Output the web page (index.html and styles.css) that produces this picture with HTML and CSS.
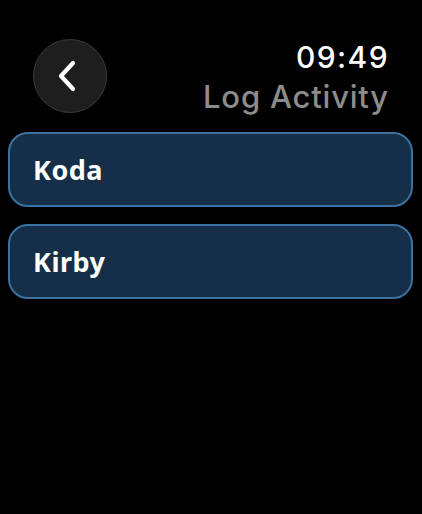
FILE: index.html
```html
<!DOCTYPE html>
<html lang="en">
<head>
<meta charset="utf-8">
<title>Log Activity</title>
<link rel="stylesheet" href="styles.css">
</head>
<body>
  <div class="screen">
    <header class="top">
      <button class="back" aria-label="Back">
        <svg width="24" height="34" viewBox="0 0 24 34">
          <path d="M17 4 L5 17 L17 30" fill="none" stroke="#fff" stroke-width="4.2" stroke-linecap="round" stroke-linejoin="round"/>
        </svg>
      </button>
      <div class="titles">
        <div class="time">09:49</div>
        <div class="title">Log Activity</div>
      </div>
    </header>
    <ul class="pets">
      <li class="pet">Koda</li>
      <li class="pet">Kirby</li>
    </ul>
  </div>
</body>
</html>
```

FILE: styles.css
```css
html, body {
  margin: 0;
  padding: 0;
  background: #000;
}

.screen {
  width: 422px;
  height: 514px;
  background: #000;
  color: #fff;
  font-family: "Inter", "Noto Sans", sans-serif;
  display: flex;
  flex-direction: column;
}

.top {
  display: flex;
  justify-content: space-between;
  align-items: flex-start;
  padding: 39px 34px 0 33px;
  height: 81px;
}

.back {
  width: 74px;
  height: 74px;
  border-radius: 50%;
  background: #1e1e1e;
  border: 1.5px solid #3a3a3a;
  display: flex;
  align-items: center;
  justify-content: center;
  padding: 0 4px 0 0;
  box-sizing: border-box;
}

.titles {
  display: flex;
  flex-direction: column;
  align-items: flex-end;
}

.time {
  font-size: 30px;
  font-weight: 500;
  line-height: 36px;
  letter-spacing: 1.4px;
  margin-right: -1px;
}

.title {
  font-size: 31px;
  font-weight: 500;
  line-height: 36px;
  color: #8c8c8c;
  margin-top: 4px;
  letter-spacing: 0.8px;
  margin-right: -1px;
}

.pets {
  list-style: none;
  margin: 12px 0 0;
  padding: 0 9px 0 8px;
  display: flex;
  flex-direction: column;
  gap: 17px;
}

.pet {
  height: 75px;
  box-sizing: border-box;
  border: 2px solid #3c72a0;
  border-radius: 20px;
  background: #142f47;
  display: flex;
  align-items: center;
  padding-left: 23px;
  font-family: "Noto Sans", sans-serif;
  font-weight: 700;
  font-size: 27px;
  letter-spacing: 0.5px;
}
```
